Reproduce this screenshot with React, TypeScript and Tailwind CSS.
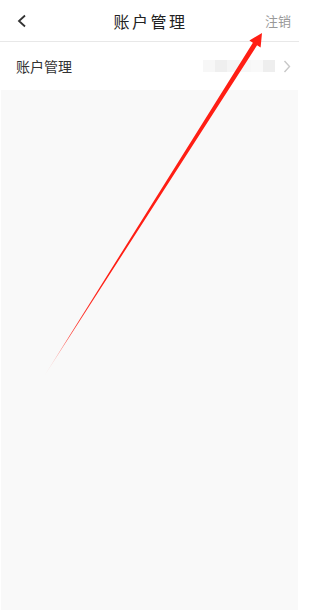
export default function App() {
  const blocks = ['#f7f7f7', '#efefef', '#f5f5f5', '#f7f7f7', '#f9f9f9', '#eeeeee'];
  return (
    <div
      className="relative w-[299px] h-[611px] flex flex-col bg-white overflow-hidden"
      style={{ fontFamily: '"Noto Sans CJK SC", "Noto Sans", sans-serif' }}
    >
      {/* Header */}
      <div className="relative h-[42px] flex items-center justify-center border-b border-[#e8e8e8]">
        <svg className="absolute left-[16px] top-[14px]" width="12" height="14" viewBox="0 0 12 14">
          <polyline points="9,1.5 3,7 9,12.5" fill="none" stroke="#333" strokeWidth="1.8" />
        </svg>
        <span className="text-[16px] text-[#222] tracking-[2.5px] pl-[2px]">账户管理</span>
        <span className="absolute right-[8px] text-[13px] text-[#999]">注销</span>
      </div>

      {/* Row */}
      <div className="h-[48px] flex items-center pl-[16px] pr-[8px]">
        <span className="text-[14px] text-[#333] flex-1">账户管理</span>
        <div className="flex h-[12px] mr-[8px]">
          {blocks.map((c, i) => (
            <div key={i} className="w-[12px] h-full" style={{ background: c }} />
          ))}
        </div>
        <svg width="8" height="13" viewBox="0 0 8 13">
          <polyline points="1.5,1 6.5,6.5 1.5,12" fill="none" stroke="#c8c8c8" strokeWidth="1.4" />
        </svg>
      </div>

      {/* Gray area */}
      <div className="flex-1 bg-[#f9f9f9] mx-px mb-px" />

      {/* Annotation arrow */}
      <svg className="absolute inset-0 pointer-events-none" width="299" height="611" viewBox="0 0 299 611">
        <defs>
          <linearGradient id="arr" x1="43" y1="378" x2="262" y2="33" gradientUnits="userSpaceOnUse">
            <stop offset="0" stopColor="#ff1e14" stopOpacity="0" />
            <stop offset="0.12" stopColor="#ff1e14" stopOpacity="0.85" />
            <stop offset="0.3" stopColor="#ff1e14" />
            <stop offset="1" stopColor="#ff1e14" />
          </linearGradient>
        </defs>
        <polygon
          points="43,378 252.9,42.7 249.4,40.5 262,33 260.6,47.5 257.1,45.3"
          fill="url(#arr)"
        />
      </svg>
    </div>
  );
}
